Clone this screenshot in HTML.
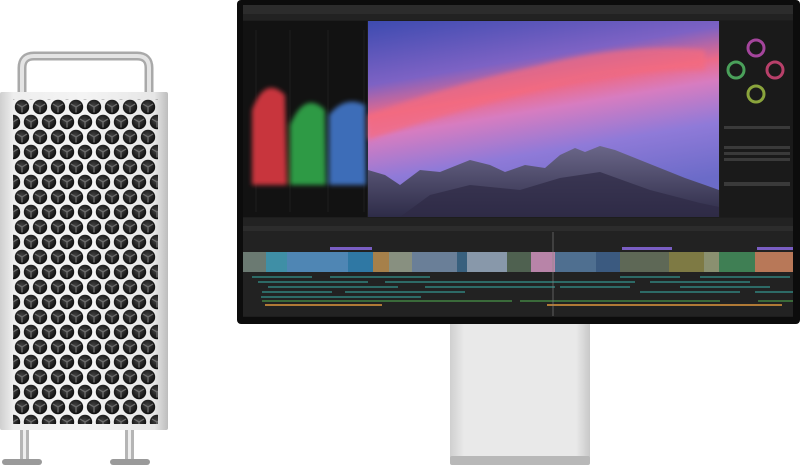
<!DOCTYPE html>
<html><head><meta charset="utf-8"><style>html,body{margin:0;padding:0;background:#fff;width:800px;height:465px;overflow:hidden}</style></head>
<body>
<svg width="800" height="465" viewBox="0 0 800 465" xmlns="http://www.w3.org/2000/svg">
<defs>
<linearGradient id="body" x1="0" x2="1" y1="0" y2="0">
<stop offset="0" stop-color="#cfcfcf"/><stop offset="0.08" stop-color="#eeeeee"/><stop offset="0.5" stop-color="#f4f4f4"/><stop offset="0.92" stop-color="#e6e6e6"/><stop offset="1" stop-color="#bdbdbd"/></linearGradient>
<radialGradient id="hole" cx="0.45" cy="0.4" r="0.6"><stop offset="0" stop-color="#444"/><stop offset="0.6" stop-color="#222"/><stop offset="1" stop-color="#0e0e0e"/></radialGradient>
<pattern id="holes" x="13" y="99.5" width="18" height="30" patternUnits="userSpaceOnUse">
<circle cx="9" cy="7.5" r="7.2" fill="url(#hole)"/>
<path d="M9 7.5 L9 13 M9 7.5 L4 4.5 M9 7.5 L14 4.5" stroke="#6e6e6e" stroke-width="1.3"/>
<circle cx="0" cy="22.5" r="7.2" fill="url(#hole)"/>
<circle cx="18" cy="22.5" r="7.2" fill="url(#hole)"/>
<path d="M0 22.5 L0 28 M0 22.5 L-5 19.5 M0 22.5 L5 19.5 M18 22.5 L18 28 M18 22.5 L13 19.5 M18 22.5 L23 19.5" stroke="#6e6e6e" stroke-width="1.3"/>
</pattern>
<linearGradient id="sky" x1="0" y1="0" x2="0.3" y2="1">
<stop offset="0" stop-color="#3d4bb0"/><stop offset="0.3" stop-color="#7d62c4"/><stop offset="0.45" stop-color="#ec6a88"/><stop offset="0.55" stop-color="#d77cc0"/><stop offset="0.75" stop-color="#8f7ad8"/><stop offset="1" stop-color="#6b6bc8"/></linearGradient>
<linearGradient id="stand" x1="0" x2="1"><stop offset="0" stop-color="#cfcfcf"/><stop offset="0.1" stop-color="#e9e9e9"/><stop offset="0.9" stop-color="#e9e9e9"/><stop offset="1" stop-color="#c8c8c8"/></linearGradient>
<linearGradient id="rock" x1="0" y1="0" x2="0" y2="1"><stop offset="0" stop-color="#6a6688"/><stop offset="1" stop-color="#2e2c48"/></linearGradient>
<filter id="bl"><feGaussianBlur stdDeviation="2.5"/></filter>
</defs>

<path d="M22 96 V68 Q22 56 34 56 H137 Q149 56 149 68 V96" fill="none" stroke="#a9a9a9" stroke-width="9"/>
<path d="M22 96 V68 Q22 56 34 56 H137 Q149 56 149 68 V96" fill="none" stroke="#e4e4e4" stroke-width="4"/>
<rect x="20" y="428" width="9" height="32" fill="#b5b5b5"/><rect x="23" y="428" width="3" height="32" fill="#eee"/>
<rect x="125" y="428" width="9" height="32" fill="#b5b5b5"/><rect x="128" y="428" width="3" height="32" fill="#eee"/>
<rect x="2" y="459" width="40" height="6" rx="3" fill="#9a9a9a"/>
<rect x="110" y="459" width="40" height="6" rx="3" fill="#9a9a9a"/>
<rect x="0" y="92" width="168" height="338" rx="2" fill="url(#body)"/>
<rect x="13" y="99" width="145" height="325" fill="url(#holes)"/>

<rect x="450" y="320" width="140" height="140" fill="url(#stand)"/>
<rect x="450" y="456" width="140" height="9" rx="2" fill="#b8b8b8"/>

<rect x="237" y="0" width="563" height="324" rx="4" fill="#0c0c0c"/>
<rect x="243" y="5" width="550" height="312" fill="#1d1d1d"/>
<rect x="243" y="5" width="550" height="9" fill="#2c2c2c"/>
<rect x="243" y="14" width="550" height="6" fill="#222"/>
<rect x="243" y="21" width="124" height="196" fill="#121212"/>
<g stroke="#2a2a2a" stroke-width="0.5"><line x1="256" y1="30" x2="256" y2="212"/><line x1="290" y1="30" x2="290" y2="212"/><line x1="328" y1="30" x2="328" y2="212"/><line x1="364" y1="30" x2="364" y2="212"/></g>
<g filter="url(#bl)">
<path d="M252 185 L252 110 Q265 75 285 95 L287 185 Z" fill="#c8363e"/>
<path d="M290 185 L290 125 Q305 90 325 110 L326 185 Z" fill="#2f9a45"/>
<path d="M329 185 L329 115 Q345 95 365 105 L366 185 Z" fill="#3d6db8"/>
</g>
<rect x="368" y="21" width="351" height="196" fill="url(#sky)"/>
<path d="M368 115 Q450 85 540 65 Q630 42 705 50 L705 70 Q620 68 540 90 Q450 112 368 140 Z" fill="#f56a7e" opacity="0.7" filter="url(#bl)"/>
<path d="M368 217 L368 170 L385 175 L400 185 L420 170 L440 172 L470 160 L490 165 L505 172 L525 165 L545 168 L560 155 L575 148 L585 152 L600 146 L615 150 L640 160 L660 168 L685 178 L705 185 L719 190 L719 217 Z" fill="url(#rock)"/>
<path d="M400 217 L430 195 L470 185 L520 190 L560 178 L600 172 L650 190 L700 203 L719 207 L719 217 Z" fill="#2f2b46" opacity="0.7"/>
<rect x="720" y="21" width="73" height="196" fill="#1a1a1a"/>
<g fill="none" stroke-width="3">
<circle cx="756" cy="48" r="8" stroke="#a4459c"/><circle cx="736" cy="70" r="8" stroke="#4aa05a"/><circle cx="775" cy="70" r="8" stroke="#b8406a"/><circle cx="756" cy="94" r="8" stroke="#8aa43c"/>
</g>
<g fill="#3a3a3a"><rect x="724" y="126" width="66" height="3"/><rect x="724" y="146" width="66" height="3"/><rect x="724" y="152" width="66" height="3"/><rect x="724" y="158" width="66" height="3"/><rect x="724" y="182" width="66" height="4"/></g>
<rect x="243" y="218" width="550" height="98" fill="#222"/>
<rect x="243" y="226" width="550" height="5" fill="#2c2c2c"/>
<rect x="330" y="247" width="42" height="3" fill="#7a5ec4"/>
<rect x="622" y="247" width="50" height="3" fill="#7a5ec4"/>
<rect x="757" y="247" width="36" height="3" fill="#7a5ec4"/>
<g>
<rect x="243" y="252" width="23" height="20" fill="#6b7a72"/><rect x="266" y="252" width="21" height="20" fill="#3f8fa6"/><rect x="287" y="252" width="61" height="20" fill="#4f86b4"/><rect x="348" y="252" width="25" height="20" fill="#2f78a4"/><rect x="373" y="252" width="16" height="20" fill="#a6804a"/><rect x="389" y="252" width="23" height="20" fill="#889080"/><rect x="412" y="252" width="45" height="20" fill="#6a7f98"/><rect x="457" y="252" width="10" height="20" fill="#38607e"/><rect x="467" y="252" width="40" height="20" fill="#8898aa"/><rect x="507" y="252" width="24" height="20" fill="#4f6150"/><rect x="531" y="252" width="24" height="20" fill="#b884a8"/><rect x="555" y="252" width="41" height="20" fill="#4f6f90"/><rect x="596" y="252" width="24" height="20" fill="#3b5a80"/><rect x="620" y="252" width="49" height="20" fill="#5e6856"/><rect x="669" y="252" width="35" height="20" fill="#7e7a44"/><rect x="704" y="252" width="15" height="20" fill="#8a9070"/><rect x="719" y="252" width="36" height="20" fill="#3f7f54"/><rect x="755" y="252" width="38" height="20" fill="#b87858"/>
</g>
<g fill="#2d6a66">
<rect x="252" y="276" width="60" height="2"/><rect x="330" y="276" width="100" height="2"/><rect x="620" y="276" width="60" height="2"/><rect x="700" y="276" width="90" height="2"/>
<rect x="258" y="281" width="110" height="2"/><rect x="385" y="281" width="250" height="2"/><rect x="650" y="281" width="100" height="2"/>
<rect x="268" y="286" width="130" height="2"/><rect x="425" y="286" width="130" height="2"/><rect x="560" y="286" width="70" height="2"/><rect x="680" y="286" width="90" height="2"/>
<rect x="262" y="291" width="70" height="2"/><rect x="345" y="291" width="120" height="2"/><rect x="640" y="291" width="100" height="2"/><rect x="755" y="291" width="38" height="2"/>
<rect x="261" y="296" width="160" height="2"/>
</g>
<g fill="#3a6a3a"><rect x="262" y="300" width="250" height="2"/><rect x="520" y="300" width="200" height="2"/><rect x="758" y="300" width="35" height="2"/></g>
<g fill="#b07a36"><rect x="265" y="304" width="117" height="2"/><rect x="547" y="304" width="235" height="2"/></g>
<line x1="553" y1="232" x2="553" y2="316" stroke="#888" stroke-width="0.6"/>
</svg>
</body></html>
